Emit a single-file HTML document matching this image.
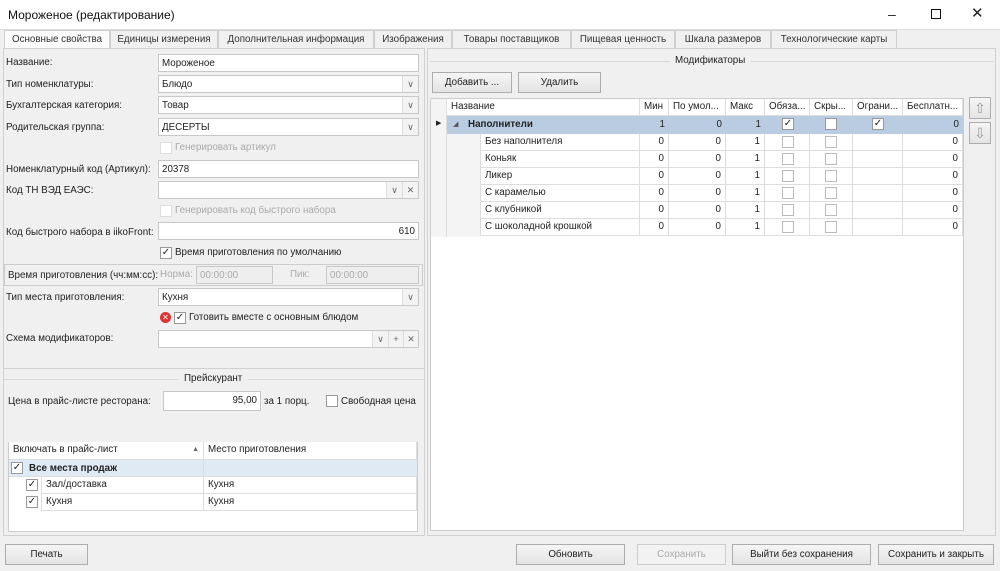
<!DOCTYPE html>
<html><head><meta charset="utf-8"><style>
*{box-sizing:border-box;margin:0;padding:0}
body{width:1000px;height:571px;background:#f0f0f0;font-family:"Liberation Sans","DejaVu Sans",sans-serif;font-size:9.8px;color:#222;position:relative;overflow:hidden}
.a{position:absolute;white-space:nowrap}
.in{position:absolute;background:#fff;border:1px solid #c8c8c8;height:18px;padding:2px 3px;line-height:13px}
.dd{position:absolute;right:0;top:0;width:16px;height:16px;border-left:1px solid #ddd;background:#f3f3f3;color:#666;font-size:9px;text-align:center;line-height:16px}
.cb{position:absolute;width:12px;height:12px;border:1px solid #999;background:#fff;font-size:10px;line-height:10px;text-align:center;color:#222}
.cb.d{border-color:#ddd}
.btn{position:absolute;border:1px solid #adadad;background:linear-gradient(#f5f5f5,#e4e4e4);text-align:center;height:21px;line-height:19px}
.tab{position:absolute;top:30px;height:19px;border:1px solid #d0d0d0;border-bottom:none;background:#f0f0f0;text-align:center;line-height:17px;font-size:9.8px;color:#333}
.g{position:absolute;border-right:1px solid #ddd;border-bottom:1px solid #ddd;height:17px;line-height:16px;padding:0 4px;overflow:hidden;white-space:nowrap}
.r{text-align:right}
</style></head><body>
<div class="a" style="left:0;top:0;width:1000px;height:30px;background:#fff"></div>
<div class="a" style="left:8px;top:8px;font-size:12px;color:#111">Мороженое (редактирование)</div>
<div class="a" style="left:888px;top:6px;font-size:14px">&#8211;</div>
<div class="a" style="left:931px;top:9px;width:10px;height:10px;border:1px solid #111"></div>
<div class="a" style="left:971px;top:4px;font-size:15px">&#10005;</div>
<div class="a" style="left:0;top:29px;width:1000px;height:1px;background:#ddd"></div>

<div class="tab" style="left:4px;width:106px;background:#fbfbfb">Основные свойства</div>
<div class="tab" style="left:110px;width:108px">Единицы измерения</div>
<div class="tab" style="left:218px;width:156px">Дополнительная информация</div>
<div class="tab" style="left:374px;width:78px">Изображения</div>
<div class="tab" style="left:452px;width:119px">Товары поставщиков</div>
<div class="tab" style="left:571px;width:104px">Пищевая ценность</div>
<div class="tab" style="left:675px;width:96px">Шкала размеров</div>
<div class="tab" style="left:771px;width:126px">Технологические карты</div>

<!-- left panel -->
<div class="a" style="left:3px;top:48px;width:422px;height:488px;border:1px solid #d0d0d0"></div>
<div class="a" style="left:4px;top:368px;width:420px;height:1px;background:#d0d0d0"></div>
<div class="a" style="left:6px;top:57px">Название:</div>
<div class="in" style="left:158px;top:54px;width:261px">Мороженое</div>
<div class="a" style="left:6px;top:79px">Тип номенклатуры:</div>
<div class="in" style="left:158px;top:75px;width:261px">Блюдо<div class="dd">&#8744;</div></div>
<div class="a" style="left:6px;top:100px">Бухгалтерская категория:</div>
<div class="in" style="left:158px;top:96px;width:261px">Товар<div class="dd">&#8744;</div></div>
<div class="a" style="left:6px;top:122px">Родительская группа:</div>
<div class="in" style="left:158px;top:118px;width:261px">ДЕСЕРТЫ<div class="dd">&#8744;</div></div>
<div class="cb d" style="left:160px;top:142px"></div><div class="a" style="left:175px;top:142px;color:#aaa">Генерировать артикул</div>
<div class="a" style="left:6px;top:164px">Номенклатурный код (Артикул):</div>
<div class="in" style="left:158px;top:160px;width:261px">20378</div>
<div class="a" style="left:6px;top:185px">Код ТН ВЭД ЕАЭС:</div>
<div class="in" style="left:158px;top:181px;width:261px"><div class="dd" style="right:16px">&#8744;</div><div class="dd">&#10005;</div></div>
<div class="cb d" style="left:160px;top:205px"></div><div class="a" style="left:175px;top:205px;color:#aaa">Генерировать код быстрого набора</div>
<div class="a" style="left:6px;top:227px">Код быстрого набора в iikoFront:</div>
<div class="in r" style="left:158px;top:222px;width:261px">610</div>
<div class="cb" style="left:160px;top:247px">&#10003;</div><div class="a" style="left:175px;top:247px">Время приготовления по умолчанию</div>
<div class="a" style="left:4px;top:264px;width:419px;height:22px;border:1px solid #ccc"></div>
<div class="a" style="left:8px;top:270px">Время приготовления (чч:мм:сс):</div>
<div class="a" style="left:160px;top:269px;color:#aaa">Норма:</div>
<div class="in" style="left:196px;top:266px;width:77px;background:#eee;color:#aaa">00:00:00</div>
<div class="a" style="left:290px;top:269px;color:#aaa">Пик:</div>
<div class="in" style="left:326px;top:266px;width:93px;background:#eee;color:#aaa">00:00:00</div>
<div class="a" style="left:6px;top:292px">Тип места приготовления:</div>
<div class="in" style="left:158px;top:288px;width:261px">Кухня<div class="dd">&#8744;</div></div>
<div class="a" style="left:160px;top:312px;width:11px;height:11px;border-radius:50%;background:#d33;color:#fff;font-size:8px;line-height:11px;text-align:center">&#10005;</div>
<div class="cb" style="left:174px;top:312px">&#10003;</div><div class="a" style="left:189px;top:312px">Готовить вместе с основным блюдом</div>
<div class="a" style="left:6px;top:333px">Схема модификаторов:</div>
<div class="in" style="left:158px;top:330px;width:261px"><div class="dd" style="right:30px">&#8744;</div><div class="dd" style="right:15px;width:15px">+</div><div class="dd" style="width:15px">&#10005;</div></div>

<div class="a" style="left:4px;top:379px;width:420px;height:1px;background:#d8d8d8"></div>
<div class="a" style="left:178px;top:373px;padding:0 6px;background:#f0f0f0">Прейскурант</div>
<div class="a" style="left:8px;top:396px">Цена в прайс-листе ресторана:</div>
<div class="in r" style="left:163px;top:391px;width:98px;height:20px">95,00</div>
<div class="a" style="left:264px;top:396px">за 1 порц.</div>
<div class="cb" style="left:326px;top:395px"></div><div class="a" style="left:341px;top:396px">Свободная цена</div>
<div class="a" style="left:8px;top:442px;width:410px;height:90px;background:#fff;border:1px solid #ccc"></div>
<div class="g" style="left:9px;top:442px;width:195px;height:18px;background:#fff">Включать в прайс-лист<span style="float:right;font-size:7px;color:#666">&#9650;</span></div>
<div class="g" style="left:204px;top:442px;width:213px;height:18px;background:#fff">Место приготовления</div>
<div class="a" style="left:9px;top:460px;width:408px;height:17px;background:#dfeaf5;border-bottom:1px solid #ddd"></div>
<div class="cb" style="left:11px;top:462px">&#10003;</div><div class="a" style="left:29px;top:463px;font-weight:bold">Все места продаж</div>
<div class="a" style="left:203px;top:460px;width:1px;height:51px;background:#ddd"></div>
<div class="cb" style="left:26px;top:479px">&#10003;</div><div class="g" style="left:41px;top:477px;width:163px;border-left:1px solid #ddd">Зал/доставка</div><div class="g" style="left:204px;top:477px;width:213px">Кухня</div>
<div class="cb" style="left:26px;top:496px">&#10003;</div><div class="g" style="left:41px;top:494px;width:163px;border-left:1px solid #ddd">Кухня</div><div class="g" style="left:204px;top:494px;width:213px">Кухня</div>

<!-- right panel -->
<div class="a" style="left:427px;top:48px;width:569px;height:488px;border:1px solid #d0d0d0"></div>
<div class="a" style="left:429px;top:61px;width:565px;height:1px;background:#d8d8d8"></div>
<div class="a" style="left:670px;top:55px;padding:0 5px;background:#f0f0f0">Модификаторы</div>
<div class="btn" style="left:432px;top:72px;width:80px">Добавить ...</div>
<div class="btn" style="left:518px;top:72px;width:83px">Удалить</div>
<div class="a" style="left:430px;top:98px;width:534px;height:433px;background:#fff;border:1px solid #ccc"></div>
<div class="a" style="left:431px;top:99px;width:16px;height:138px;background:#f4f4f4;border-right:1px solid #ddd"></div>
<div class="a" style="left:447px;top:134px;width:33px;height:103px;background:#f4f4f4"></div>
<div class="g" style="left:447px;top:99px;width:193px">Название</div>
<div class="g" style="left:640px;top:99px;width:29px">Мин</div>
<div class="g" style="left:669px;top:99px;width:57px">По умол...</div>
<div class="g" style="left:726px;top:99px;width:39px">Макс</div>
<div class="g" style="left:765px;top:99px;width:45px">Обяза...</div>
<div class="g" style="left:810px;top:99px;width:43px">Скры...</div>
<div class="g" style="left:853px;top:99px;width:50px">Ограни...</div>
<div class="g" style="left:903px;top:99px;width:60px">Бесплатн...</div>
<div class="a" style="left:447px;top:116px;width:516px;height:18px;background:#b9cce2"></div>
<div class="a" style="left:436px;top:119px;font-size:7px">&#9654;</div>
<div class="a" style="left:453px;top:120px;font-size:7px;color:#555">&#9698;</div>
<div class="a" style="left:468px;top:119px;font-weight:bold">Наполнители</div>
<div class="a r" style="left:640px;top:119px;width:25px">1</div>
<div class="a r" style="left:669px;top:119px;width:53px">0</div>
<div class="a r" style="left:726px;top:119px;width:35px">1</div>
<div class="cb" style="left:782px;top:118px">&#10003;</div>
<div class="cb" style="left:825px;top:118px"></div>
<div class="cb" style="left:872px;top:118px">&#10003;</div>
<div class="a r" style="left:903px;top:119px;width:56px">0</div>
<div id="rows"></div>
<script>
var n=["Без наполнителя","Коньяк","Ликер","С карамелью","С клубникой","С шоколадной крошкой"],h="";
n.forEach(function(t,i){var y=134+i*17;
h+='<div class="g" style="left:480px;top:'+y+'px;width:160px;border-left:1px solid #ddd">'+t+'</div>'+
'<div class="g r" style="left:640px;top:'+y+'px;width:29px">0</div>'+
'<div class="g r" style="left:669px;top:'+y+'px;width:57px">0</div>'+
'<div class="g r" style="left:726px;top:'+y+'px;width:39px">1</div>'+
'<div class="g" style="left:765px;top:'+y+'px;width:45px"></div><div class="cb d" style="left:782px;top:'+(y+2)+'px;border-color:#bbb"></div>'+
'<div class="g" style="left:810px;top:'+y+'px;width:43px"></div><div class="cb d" style="left:825px;top:'+(y+2)+'px;border-color:#bbb"></div>'+
'<div class="g" style="left:853px;top:'+y+'px;width:50px"></div>'+
'<div class="g r" style="left:903px;top:'+y+'px;width:60px">0</div>';});
document.getElementById('rows').innerHTML=h;
</script>
<div class="btn" style="left:969px;top:97px;width:22px;height:22px;color:#999;font-size:14px;line-height:20px">&#8679;</div>
<div class="btn" style="left:969px;top:122px;width:22px;height:22px;color:#999;font-size:14px;line-height:20px">&#8681;</div>

<!-- bottom -->
<div class="btn" style="left:5px;top:544px;width:83px">Печать</div>
<div class="btn" style="left:516px;top:544px;width:109px">Обновить</div>
<div class="btn" style="left:637px;top:544px;width:89px;color:#aaa;background:#f2f2f2;border-color:#ccc">Сохранить</div>
<div class="btn" style="left:732px;top:544px;width:139px">Выйти без сохранения</div>
<div class="btn" style="left:878px;top:544px;width:116px">Сохранить и закрыть</div>
</body></html>
